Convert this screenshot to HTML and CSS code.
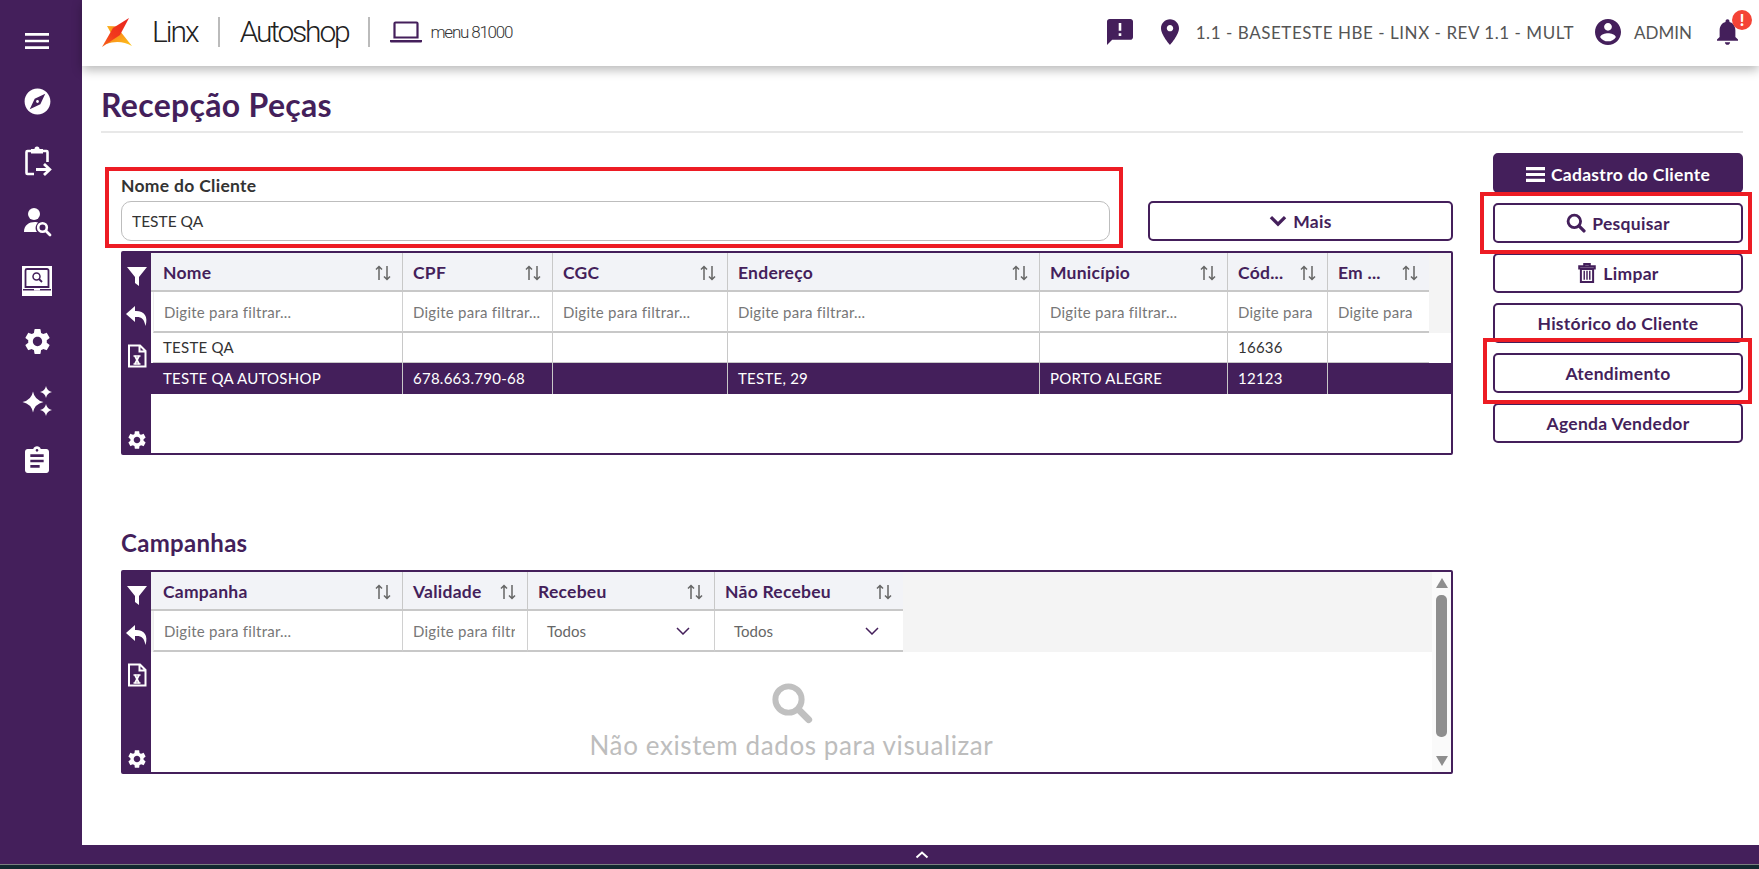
FILE: index.html
```html
<!DOCTYPE html>
<html lang="pt-BR">
<head>
<meta charset="utf-8">
<title>Recepção Peças</title>
<link rel="stylesheet" href="styles.css">
</head>
<body>
<svg class="defs" width="0" height="0" aria-hidden="true">
  <defs>
    <symbol id="sort" viewBox="0 0 18 18"><path d="M5 16V2.500M2 5.500 5 2.500 8 5.500M13 2v13.500M10 12.500 13 15.500 16 12.500" fill="none" stroke="currentColor" stroke-width="1.500"/></symbol>
    <symbol id="tb-filter" viewBox="0 0 24 24"><path d="M2 3h20l-8 10v9l-4-3v-6z" fill="#fff"/></symbol>
    <symbol id="tb-undo" viewBox="0 0 24 24"><path d="M10 2 1 10l9 8v-5c6-.5 9 1 10.500 9C23.500 12 19 6.500 10 7z" fill="#fff"/></symbol>
    <symbol id="tb-xls" viewBox="0 0 24 24"><path d="M4 1.500h11l5.500 5.500v15.500H4zM14.500 1.500V7.500h6" fill="none" stroke="#fff" stroke-width="2"/><path d="M8.500 12h7M8.500 20h7" fill="none" stroke="#fff" stroke-width="1.400"/><path d="M10 12l4 8M14 12l-4 8" fill="none" stroke="#fff" stroke-width="1.800"/></symbol>
    <symbol id="gear" viewBox="0 0 24 24"><path d="M19.140 12.940c.04-.3.06-.61.06-.94 0-.32-.02-.64-.07-.94l2.030-1.580c.18-.14.23-.41.12-.61l-1.920-3.320c-.12-.22-.37-.29-.59-.22l-2.390.96c-.5-.38-1.030-.7-1.620-.94l-.36-2.540c-.04-.24-.24-.41-.48-.41h-3.840c-.24 0-.43.17-.47.41l-.36 2.540c-.59.24-1.130.57-1.620.94l-2.390-.96c-.22-.08-.47 0-.59.22L2.740 8.870c-.12.21-.08.47.12.61l2.030 1.580c-.05.3-.09.63-.09.94s.02.64.07.94l-2.030 1.580c-.18.14-.23.41-.12.61l1.920 3.320c.12.22.37.29.59.22l2.390-.96c.5.38 1.030.7 1.620.94l.36 2.540c.05.24.24.41.48.41h3.840c.24 0 .44-.17.47-.41l.36-2.540c.59-.24 1.130-.56 1.620-.94l2.390.96c.22.08.47 0 .59-.22l1.920-3.320c.12-.22.07-.47-.12-.61l-2.010-1.580zM12 15.600c-1.980 0-3.600-1.620-3.600-3.600s1.620-3.600 3.600-3.600 3.600 1.620 3.600 3.600-1.620 3.600-3.600 3.600z" fill="currentColor"/></symbol>
    <symbol id="search" viewBox="0 0 24 24"><circle cx="10" cy="10" r="7.500" fill="none" stroke="currentColor" stroke-width="3.400"/><path d="M15.500 15.500 21.500 21.500" stroke="currentColor" stroke-width="4" stroke-linecap="round"/></symbol>
    <symbol id="chev" viewBox="0 0 14 8"><path d="M1 1l6 6 6-6" fill="none" stroke="currentColor" stroke-width="1.500"/></symbol>
  </defs>
</svg>

<div class="app">
  <nav class="sidebar">
    <a class="nav-item"><svg class="ic32" viewBox="0 0 24 24"><path d="M3 18h18v-2H3v2zm0-5h18v-2H3v2zm0-7v2h18V6H3z" fill="#fff"/></svg></a>
    <a class="nav-item"><svg class="ic31" viewBox="0 0 24 24"><path d="M12 10.900c-.61 0-1.100.49-1.100 1.100s.49 1.100 1.100 1.100c.61 0 1.100-.49 1.100-1.100s-.49-1.100-1.100-1.100zM12 2C6.480 2 2 6.480 2 12s4.480 10 10 10 10-4.480 10-10S17.520 2 12 2zm2.190 12.190L6 18l3.810-8.190L18 6l-3.810 8.190z" fill="#fff"/></svg></a>
    <a class="nav-item"><svg class="ic32" viewBox="0 0 32 32"><path d="M11 6H6.500a1 1 0 0 0-1 1v21a1 1 0 0 0 1 1H13M21 6h4.500a1 1 0 0 1 1 1v10" fill="none" stroke="#fff" stroke-width="2.600"/><path d="M10 8.500V4h3.500a2.500 2.500 0 0 1 5 0H22v4.500z" fill="#fff"/><path d="M15 24.500h13M23 19l5.800 5.500-5.800 5.500" fill="none" stroke="#fff" stroke-width="2.800"/></svg></a>
    <a class="nav-item"><svg class="ic32" viewBox="0 0 32 32"><circle cx="13" cy="9" r="6" fill="#fff"/><path d="M3 27c0-7 5-10 11-10 1.500 0 2 .2 3 .5-3 3-3 7-1 9.500z" fill="#fff"/><circle cx="21.500" cy="22.500" r="4.300" fill="none" stroke="#fff" stroke-width="2.600"/><path d="M25 26l4 4" stroke="#fff" stroke-width="2.800" stroke-linecap="round"/></svg></a>
    <a class="nav-item"><span class="nav-active"><svg class="ic30" viewBox="0 0 30 30"><path d="M5 3h20a1.500 1.500 0 0 1 1.500 1.500V21h-23V4.500A1.500 1.500 0 0 1 5 3z" fill="none" stroke="#441f5b" stroke-width="1.800"/><path d="M1 23h11v1.800h6V23h11v1.500H1z" fill="#441f5b"/><circle cx="14.500" cy="10.500" r="3.500" fill="none" stroke="#441f5b" stroke-width="1.500"/><path d="M17 13l3 3" stroke="#441f5b" stroke-width="1.800"/></svg></span></a>
    <a class="nav-item nav-gear"><svg class="ic31"><use href="#gear"/></svg></a>
    <a class="nav-item"><svg class="ic32" viewBox="0 0 32 32"><path d="M12 6.500Q13.500 15 22.500 17 13.500 19 12 27.500 10.500 19 1.500 17 10.500 15 12 6.500z" fill="#fff"/><path d="M25 1Q26 6 31 7 26 8 25 13 24 8 19 7 24 6 25 1zM25 19Q26 24 31 25 26 26 25 31 24 26 19 25 24 24 25 19z" fill="#fff"/></svg></a>
    <a class="nav-item"><svg class="ic32" viewBox="0 0 24 24"><path d="M19 3h-4.180C14.400 1.840 13.300 1 12 1c-1.300 0-2.400.84-2.820 2H5c-1.100 0-2 .9-2 2v14c0 1.100.9 2 2 2h14c1.100 0 2-.9 2-2V5c0-1.100-.9-2-2-2zm-7 0c.55 0 1 .45 1 1s-.45 1-1 1-1-.45-1-1 .45-1 1-1zm2 14H7v-2h7v2zm3-4H7v-2h10v2zm0-4H7V7h10v2z" fill="#fff"/></svg></a>
  </nav>

  <div class="main">
    <header class="topbar">
      <svg class="logo" viewBox="0 0 30 29">
        <defs>
          <linearGradient id="lg1" x1="1" y1="0" x2="0" y2="1"><stop offset="0" stop-color="#e8251f"/><stop offset=".6" stop-color="#f2391c"/><stop offset="1" stop-color="#f7691b"/></linearGradient>
          <linearGradient id="lg2" x1="0" y1="0" x2="1" y2="1"><stop offset="0" stop-color="#f8701b"/><stop offset="1" stop-color="#fdc91b"/></linearGradient>
          <linearGradient id="lg3" x1="0" y1="0" x2="1" y2="0"><stop offset="0" stop-color="#fbb81b"/><stop offset="1" stop-color="#f6691b"/></linearGradient>
        </defs>
        <path d="M5 8 17 8.500 10 17z" fill="url(#lg3)"/>
        <path d="M12 15 18 13 30 28Q18 21 4 26z" fill="url(#lg2)"/>
        <path d="M27 0 11 10 0 29 18 17z" fill="url(#lg1)"/>
      </svg>
      <span class="brand brand-linx">Linx</span>
      <span class="brand-sep"></span>
      <span class="brand brand-auto">Autoshop</span>
      <span class="brand-sep brand-sep-2"></span>
      <svg class="laptop" viewBox="0 0 32 22"><path d="M4.500 2.500a1 1 0 0 1 1-1h21a1 1 0 0 1 1 1v14h-23z" fill="none" stroke="#441f5b" stroke-width="2.200"/><path d="M0 19h32v1.500a1 1 0 0 1-1 1H1a1 1 0 0 1-1-1z" fill="#441f5b"/></svg>
      <span class="menu-code">menu 81000</span>

      <div class="top-right">
        <svg class="ic-chat" viewBox="2 2 20 20"><path d="M20 2H4c-1.100 0-1.990.9-1.990 2L2 22l4-4h14c1.100 0 2-.9 2-2V4c0-1.100-.9-2-2-2zm-7 9h-2V5h2v6zm0 4h-2v-2h2v2z" fill="#441f5b"/></svg>
        <svg class="ic-pin" viewBox="5 2 14 20"><path d="M12 2C8.130 2 5 5.130 5 9c0 5.250 7 13 7 13s7-7.750 7-13c0-3.870-3.130-7-7-7zm0 9.500c-1.380 0-2.500-1.120-2.500-2.500s1.120-2.500 2.500-2.500 2.500 1.120 2.500 2.500-1.120 2.500-2.500 2.500z" fill="#441f5b"/></svg>
        <span class="top-text top-base">1.1 - BASETESTE HBE - LINX - REV 1.1 - MULT</span>
        <svg class="ic-user" viewBox="2 2 20 20"><path d="M12 2C6.480 2 2 6.480 2 12s4.480 10 10 10 10-4.480 10-10S17.520 2 12 2zm0 3c1.660 0 3 1.340 3 3s-1.340 3-3 3-3-1.340-3-3 1.340-3 3-3zm0 14.200c-2.500 0-4.710-1.280-6-3.220.03-1.990 4-3.080 6-3.080 1.990 0 5.970 1.090 6 3.080-1.290 1.940-3.500 3.220-6 3.220z" fill="#441f5b"/></svg>
        <span class="top-text top-admin">ADMIN</span>
        <span class="bell">
          <svg class="ic-bell" viewBox="4 2.500 16 19.500"><path d="M12 22c1.100 0 2-.9 2-2h-4c0 1.100.89 2 2 2zm6-6v-5c0-3.070-1.640-5.640-4.500-6.320V4c0-.83-.67-1.500-1.500-1.500s-1.500.67-1.500 1.500v.68C7.630 5.360 6 7.920 6 11v5l-2 2v1h16v-1l-2-2z" fill="#441f5b"/></svg>
          <span class="badge">!</span>
        </span>
      </div>
    </header>

    <div class="page-title"><h1>Recepção Peças</h1></div>

    <div class="content">
      <section class="left">
        <div class="filter-row">
          <label class="field">
            <span class="field-label">Nome do Cliente</span>
            <input class="field-input" type="text" value="TESTE QA">
          </label>
          <button class="btn btn-more"><svg class="ic-chev-b" viewBox="0 0 16 11"><path d="M1.500 2 8 8.500 14.500 2" fill="none" stroke="currentColor" stroke-width="3"/></svg>Mais</button>
        </div>

        <div class="datatable">
          <div class="tools">
            <svg class="tool"><use href="#tb-filter"/></svg>
            <svg class="tool"><use href="#tb-undo"/></svg>
            <svg class="tool"><use href="#tb-xls"/></svg>
            <svg class="tool tool-gear"><use href="#gear"/></svg>
          </div>
          <div class="dt-body">
            <div class="row cols-a row-head">
              <div class="th"><span class="th-t">Nome</span><svg class="sort"><use href="#sort"/></svg></div>
              <div class="th"><span class="th-t">CPF</span><svg class="sort"><use href="#sort"/></svg></div>
              <div class="th"><span class="th-t">CGC</span><svg class="sort"><use href="#sort"/></svg></div>
              <div class="th"><span class="th-t">Endereço</span><svg class="sort"><use href="#sort"/></svg></div>
              <div class="th"><span class="th-t">Município</span><svg class="sort"><use href="#sort"/></svg></div>
              <div class="th"><span class="th-t">Cód...</span><svg class="sort"><use href="#sort"/></svg></div>
              <div class="th"><span class="th-t">Em ...</span><svg class="sort"><use href="#sort"/></svg></div>
            </div>
            <div class="row cols-a row-filter">
              <div class="tf"><input placeholder="Digite para filtrar..."></div>
              <div class="tf"><input placeholder="Digite para filtrar..."></div>
              <div class="tf"><input placeholder="Digite para filtrar..."></div>
              <div class="tf"><input placeholder="Digite para filtrar..."></div>
              <div class="tf"><input placeholder="Digite para filtrar..."></div>
              <div class="tf"><input placeholder="Digite para filtrar..."></div>
              <div class="tf"><input placeholder="Digite para filtrar..."></div>
            </div>
            <div class="row cols-a row-data">
              <div class="td">TESTE QA</div><div class="td"></div><div class="td"></div><div class="td"></div><div class="td"></div><div class="td">16636</div><div class="td"></div>
            </div>
            <div class="row cols-a row-data row-sel">
              <div class="td">TESTE QA AUTOSHOP</div><div class="td">678.663.790-68</div><div class="td"></div><div class="td">TESTE, 29</div><div class="td">PORTO ALEGRE</div><div class="td">12123</div><div class="td"></div>
            </div>
          </div>
        </div>

        <h2 class="section-title">Campanhas</h2>

        <div class="datatable">
          <div class="tools">
            <svg class="tool"><use href="#tb-filter"/></svg>
            <svg class="tool"><use href="#tb-undo"/></svg>
            <svg class="tool"><use href="#tb-xls"/></svg>
            <svg class="tool tool-gear"><use href="#gear"/></svg>
          </div>
          <div class="dt-body dt-body-scroll">
            <div class="dt-head-fill">
              <div class="row cols-b row-head">
                <div class="th"><span class="th-t">Campanha</span><svg class="sort"><use href="#sort"/></svg></div>
                <div class="th"><span class="th-t">Validade</span><svg class="sort"><use href="#sort"/></svg></div>
                <div class="th"><span class="th-t">Recebeu</span><svg class="sort"><use href="#sort"/></svg></div>
                <div class="th"><span class="th-t">Não Recebeu</span><svg class="sort"><use href="#sort"/></svg></div>
              </div>
              <div class="row cols-b row-filter">
                <div class="tf"><input placeholder="Digite para filtrar..."></div>
                <div class="tf"><input placeholder="Digite para filtrar..."></div>
                <div class="tf tf-select"><span>Todos</span><svg class="chev"><use href="#chev"/></svg></div>
                <div class="tf tf-select"><span>Todos</span><svg class="chev"><use href="#chev"/></svg></div>
              </div>
            </div>
            <div class="empty">
              <svg class="empty-icon"><use href="#search"/></svg>
              <p class="empty-text">Não existem dados para visualizar</p>
            </div>
          </div>
          <div class="scrollbar">
            <span class="arrow arrow-up"></span>
            <span class="thumb"></span>
            <span class="arrow arrow-down"></span>
          </div>
        </div>
      </section>

      <aside class="actions">
        <button class="btn btn-solid"><svg class="ic-bars" viewBox="0 0 18 16"><path d="M0 1h18v3H0zM0 6.500h18v3H0zM0 12h18v3H0z" fill="currentColor"/></svg>Cadastro do Cliente</button>
        <button class="btn"><svg class="ic-btn"><use href="#search"/></svg>Pesquisar</button>
        <button class="btn"><svg class="ic-btn" viewBox="0 0 16 18"><path d="M1 3h14v2H1zM5.500 3V1h5v2M2.500 5.500h11V17h-11z" fill="none" stroke="currentColor" stroke-width="1.800"/><path d="M5.500 7v8M8 7v8M10.500 7v8" stroke="currentColor" stroke-width="1.300"/></svg>Limpar</button>
        <button class="btn">Histórico do Cliente</button>
        <button class="btn">Atendimento</button>
        <button class="btn">Agenda Vendedor</button>
      </aside>
    </div>

    <span class="mark mark-name"></span>
    <span class="mark mark-search"></span>
    <span class="mark mark-attend"></span>
  </div>
</div>

<footer class="bottombar"><svg class="ic-up" viewBox="0 0 14 8"><path d="M1.500 6.500 7 1.500l5.500 5" fill="none" stroke="#fff" stroke-width="2"/></svg></footer>
<div class="taskstrip"></div>
</body>
</html>
```

FILE: styles.css
```css
* { box-sizing: border-box; }

html, body {
  margin: 0;
  height: 100%;
  overflow: hidden;
}

body {
  background: #fff;
  color: #333;
  font-family: Lato, "Noto Sans", sans-serif;
  font-size: 15px;
}

.defs { position: absolute; }

.app {
  display: grid;
  grid-template-columns: 82px 1fr;
  height: 845px;
}

/* sidebar */
.sidebar {
  background: #441f5b;
  color: #fff;
  display: flex;
  flex-direction: column;
  align-items: center;
  padding: 11px 8px 0 0;
}

.nav-item {
  height: 60px;
  flex: none;
  display: flex;
  align-items: center;
  justify-content: center;
  color: #fff;
}

.ic32 { width: 32px; height: 32px; }
.ic31 { width: 31px; height: 31px; }
.ic30 { width: 30px; height: 30px; }

.nav-active {
  width: 30px;
  height: 30px;
  background: #fff;
  display: flex;
}

/* main */
.main {
  position: relative;
  min-width: 0;
}

.topbar {
  height: 66px;
  display: flex;
  align-items: center;
  padding: 0 0 2px 20px;
  background: #fff;
  box-shadow: 0 4px 10px rgba(0, 0, 0, .28);
  position: relative;
}

.logo { width: 30px; height: 29px; margin-right: 20px; }

.brand {
  font-family: Roboto, sans-serif;
  font-weight: 300;
  color: #222;
  font-size: 30px;
  line-height: 1;
}

.brand-linx { letter-spacing: -2px; }
.brand-auto { letter-spacing: -2.200px; }

.brand-sep {
  width: 2px;
  height: 30px;
  background: #bbb;
  margin: 0 20px 0 20px;
}

.brand-sep-2 { margin: 0 20px 0 20px; }

.laptop { width: 32px; height: 22px; margin-right: 8px; }

.menu-code {
  font-family: Roboto, sans-serif;
  font-weight: 300;
  font-size: 17px;
  letter-spacing: -1.200px;
  color: #333;
}

.top-right {
  margin-left: auto;
  display: flex;
  align-items: center;
  padding-right: 21px;
}

.ic-chat { width: 26px; height: 26px; margin-right: 28px; }
.ic-pin { width: 18px; height: 26px; margin-right: 17px; }
.top-text { color: #555; font-size: 17px; letter-spacing: .55px; }
.top-base { margin-right: 21px; }
.ic-user { width: 26px; height: 26px; margin-right: 13px; }
.top-admin { margin-right: 25px; letter-spacing: 0; }

.bell { position: relative; display: flex; }
.ic-bell { width: 21px; height: 26px; }

.badge {
  position: absolute;
  left: 15px;
  top: -9px;
  width: 20px;
  height: 20px;
  border-radius: 50%;
  background: #f44336;
  color: #fff;
  font-size: 16px;
  font-weight: 900;
  line-height: 20px;
  text-align: center;
}

.page-title {
  height: 67px;
  margin: 0 16px 0 19px;
  padding-top: 12px;
  border-bottom: 2px solid #e8e8e8;
  display: flex;
  align-items: center;
}

.page-title h1 {
  margin: 0;
  color: #441f5b;
  font-size: 32px;
  letter-spacing: .3px;
  font-weight: 700;
  line-height: 1;
}

.content {
  display: flex;
  gap: 40px;
  margin: 20px 16px 0 39px;
}

.left { width: 1332px; flex: none; }

.filter-row {
  display: grid;
  grid-template-columns: 989px 305px;
  column-gap: 38px;
  align-items: end;
  padding-top: 23px;
}

.field { display: block; }

.field-label {
  display: block;
  font-size: 17.500px;
  letter-spacing: .3px;
  font-weight: 700;
  line-height: 20px;
  color: #333;
  margin-bottom: 5px;
}

.field-input {
  display: block;
  width: 100%;
  height: 40px;
  padding: 0 10px;
  border: 1px solid #bdbdbd;
  border-radius: 10px;
  font: inherit;
  font-size: 15.500px;
  color: #333;
  background: #fff;
}

.btn {
  display: flex;
  align-items: center;
  justify-content: center;
  gap: 6px;
  height: 40px;
  width: 100%;
  background: #fff;
  border: 2px solid #441f5b;
  border-radius: 5px;
  color: #441f5b;
  font-family: inherit;
  font-size: 17.500px;
  letter-spacing: .3px;
  font-weight: 700;
  padding: 0;
}

.btn-solid { background: #441f5b; color: #fff; padding-top: 3px; }
.ic-chev-b { width: 18px; height: 12px; }
.ic-btn { width: 20px; height: 20px; }
.ic-bars { width: 19px; height: 17px; }

/* tables */
.datatable {
  display: flex;
  height: 204px;
  margin-top: 10px;
  border: 2px solid #441f5b;
  border-radius: 2px;
}

.tools {
  width: 28px;
  flex: none;
  background: #441f5b;
  display: flex;
  flex-direction: column;
  align-items: center;
  gap: 16px;
  padding: 11px 0 2px;
  color: #fff;
}

.tool { width: 24px; height: 24px; flex: none; }
.tool-gear { margin-top: auto; width: 22px; height: 22px; }

.dt-body { flex: 1; min-width: 0; }

.row { display: grid; }
.cols-a { grid-template-columns: 252px 150px 175px 312px 188px 100px 101px 1fr; }
.cols-b { grid-template-columns: 252px 125px 187px 188px; }

.row-head { height: 39px; }
.row-filter { height: 41px; }
.row-data { height: 30px; }

.th {
  background: #f2f3f7;
  border-right: 1px solid #c8c8c8;
  border-bottom: 2px solid #c8c8c8;
  display: flex;
  align-items: center;
  justify-content: space-between;
  padding: 2px 10px 0 10px;
  min-width: 0;
}

.th:first-child { padding-left: 12px; }

.cols-a .th:last-child,
.cols-b .th:last-child { border-right: 0; }

.th-t {
  color: #441f5b;
  font-size: 17.500px;
  letter-spacing: .25px;
  font-weight: 700;
  white-space: nowrap;
}

.sort { width: 18px; height: 18px; color: #666; flex: none; }

.row-head.cols-a::after,
.row-filter.cols-a::after { content: ""; background: #f4f4f4; }

.tf {
  background: #fff;
  border-right: 1px solid #d0d0d0;
  border-bottom: 2px solid #c8c8c8;
  min-width: 0;
}

.tf:first-child { margin-left: 2px; border-left: 1px solid #eee; }
.tf:last-child { border-right: 0; }

.tf input {
  width: 100%;
  height: 100%;
  border: 0;
  outline: 0;
  background: transparent;
  padding: 0 12px 0 10px;
  font: inherit;
  letter-spacing: .25px;
  color: #333;
}

.tf input::placeholder { color: #777; opacity: 1; }

.tf-select {
  display: flex;
  align-items: center;
  justify-content: space-between;
  padding: 0 24px 0 19px;
  color: #666;
}

.chev { width: 14px; height: 8px; color: #441f5b; }

.td {
  border-right: 1px solid #c8c8c8;
  border-bottom: 1px solid #c8c8c8;
  padding: 0 10px;
  line-height: 28px;
  letter-spacing: .25px;
  color: #333;
  white-space: nowrap;
  overflow: hidden;
}

.td:first-child { margin-left: 2px; padding-left: 10px; }
.td:nth-child(7) { border-right: 0; }

.row-sel { background: #441f5b; height: 31px; }
.row-sel .td { color: #fff; border-bottom: 0; line-height: 31px; }

.section-title {
  margin: 76px 0 0;
  color: #441f5b;
  font-size: 24px;
  letter-spacing: .3px;
  font-weight: 700;
  line-height: 24px;
}

.section-title + .datatable { margin-top: 15px; }

.dt-body-scroll { display: flex; flex-direction: column; }
.dt-head-fill { background: #f4f4f4; }

.empty {
  flex: 1;
  display: flex;
  flex-direction: column;
  align-items: center;
  padding-top: 30px;
  color: #c0c0c0;
}

.empty-icon { width: 42px; height: 42px; }

.empty-text {
  margin: 6px 0 0;
  font-size: 26px;
  letter-spacing: .6px;
  line-height: 30px;
  color: #bdbdbd;
}

.scrollbar {
  width: 19px;
  flex: none;
  background: #fafafa;
  display: flex;
  flex-direction: column;
  align-items: center;
  padding: 6px 0;
}

.thumb {
  width: 11px;
  height: 143px;
  background: #8e8e8e;
  border-radius: 5px;
  margin: 7px 0 19px;
}

.arrow {
  width: 0;
  height: 0;
  border-left: 6px solid transparent;
  border-right: 6px solid transparent;
}

.arrow-up { border-bottom: 10px solid #8e8e8e; }
.arrow-down { border-top: 10px solid #8e8e8e; }

/* actions */
.actions {
  width: 250px;
  flex: none;
  display: flex;
  flex-direction: column;
  gap: 10px;
}

/* annotation rectangles */
.mark {
  position: absolute;
  border: 4px solid #ed1c24;
  pointer-events: none;
}

.mark-name { left: 23px; top: 167px; width: 1018px; height: 81px; }
.mark-search { left: 1398px; top: 192px; width: 272px; height: 62px; }
.mark-attend { left: 1401px; top: 338px; width: 269px; height: 66px; }

/* bottom */
.bottombar {
  height: 19px;
  background: #441f5b;
  display: flex;
  align-items: center;
  justify-content: center;
  padding-left: 85px;
}

.ic-up { width: 14px; height: 8px; }

.taskstrip {
  height: 5px;
  background: #12282f;
  border-top: 1px solid #7a7f80;
}
```
